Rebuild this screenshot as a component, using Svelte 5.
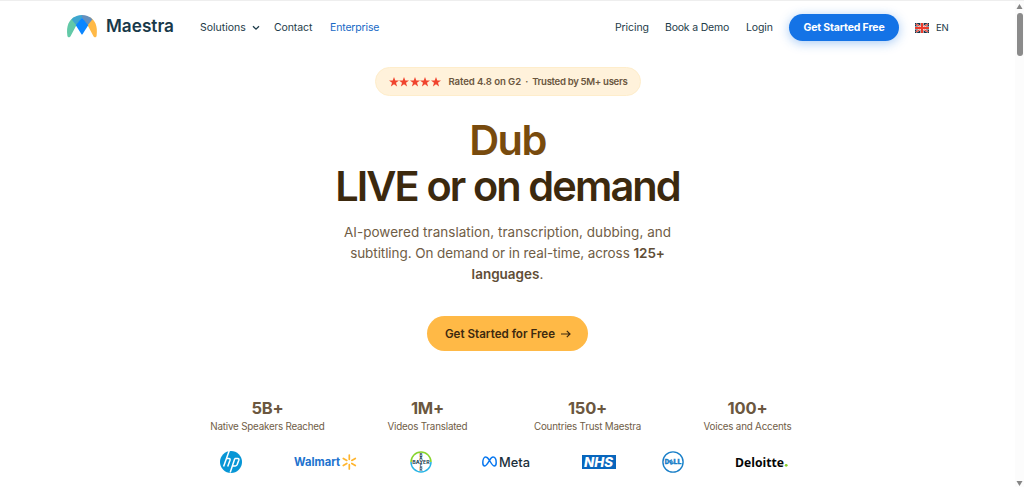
<script lang="ts">
  const stats = [
    { value: '5B+', label: 'Native Speakers Reached' },
    { value: '1M+', label: 'Videos Translated' },
    { value: '150+', label: 'Countries Trust Maestra' },
    { value: '100+', label: 'Voices and Accents' },
  ];
  const stars = [0, 1, 2, 3, 4];
</script>

<div class="page">
  <div class="content">
    <header>
      <a class="brand" href="#home">
        <svg width="30" height="23" viewBox="0 0 30 23">
          <path d="M.4 21C-1 11 2 4.5 8 1.8L11.5 10L9 11L3.4 21.4Q1.2 23.5 .4 21Z" fill="#62c9a7" />
          <path d="M29.6 21C31 11 28 4.5 22 1.8L18.5 10L21 11L26.6 21.4Q28.8 23.5 29.6 21Z" fill="#ffb946" />
          <path d="M4.5 4.2C8 1 11 0 15 0V3L9.5 10.5Z" fill="#3ea6cf" />
          <path d="M15 0C19 0 22 1 25.5 4.2L20.5 10.5L15 3Z" fill="#6590bd" />
          <path d="M15 2.5L21.2 10.2L15.7 19Q15 20 14.3 19L8.8 10.2Z" fill="#0b86ff" />
        </svg>
        <span>Maestra</span>
      </a>
      <nav class="left">
        <a class="solutions" href="#solutions">Solutions
          <svg width="8" height="6" viewBox="0 0 8 6" fill="none" stroke="#1d3b49" stroke-width="1.3"><path d="M1 1.2L4 4.2L7 1.2" /></svg>
        </a>
        <a class="contact" href="#contact">Contact</a>
        <a class="enterprise" href="#enterprise">Enterprise</a>
      </nav>
      <nav class="right">
        <a class="pricing" href="#pricing">Pricing</a>
        <a class="demo" href="#demo">Book a Demo</a>
        <a class="login" href="#login">Login</a>
        <a class="signup" href="#signup">Get Started Free</a>
        <span class="lang">
          <svg width="14" height="10" viewBox="0 0 14 10">
            <rect width="14" height="10" fill="#17364a" />
            <path d="M1 1L13 9M13 1L1 9" stroke="#fff" stroke-width="2" />
            <path d="M1 1L13 9M13 1L1 9" stroke="#ed3b2b" stroke-width="1.1" />
            <path d="M7 0V10M0 5H14" stroke="#fff" stroke-width="3.2" />
            <path d="M7 0V10M0 5H14" stroke="#ed3b2b" stroke-width="2.2" />
          </svg>
          EN
        </span>
      </nav>
    </header>

    <main>
      <div class="rating">
        <span class="stars">
          {#each stars as star (star)}
            <svg width="10" height="10" viewBox="0 0 20 20"><path d="M10 0L12.6 7H20L14 11.7L16.2 19L10 14.7L3.8 19L6 11.7L0 7H7.4Z" fill="#f0442e" /></svg>
          {/each}
        </span>
        <span class="rated">Rated 4.8 on G2</span>
        <span class="dot">·</span>
        <span>Trusted by 5M+ users</span>
      </div>

      <h1><span class="accent">Dub</span><span class="headline">LIVE or on demand</span></h1>

      <p class="intro">
        <span class="first">AI-powered translation, transcription, dubbing, and</span>
        <span class="second">subtitling. On demand or in real-time, across <b>125+</b></span>
        <span><b>languages</b>.</span>
      </p>

      <a class="cta" href="#signup">
        <span>Get Started for Free</span>
        <svg width="10" height="8" viewBox="0 0 10 8" fill="none" stroke="#3d290f" stroke-width="1.2"><path d="M0 4H9M5.8 .8L9 4L5.8 7.2" /></svg>
      </a>

      <section class="stats">
        {#each stats as stat (stat.value)}
          <div class="stat">
            <strong>{stat.value}</strong>
            <span>{stat.label}</span>
          </div>
        {/each}
      </section>

      <section class="logos">
        <svg width="22" height="22" viewBox="0 0 22 22">
          <circle cx="11" cy="11" r="11" fill="#0796d6" />
          <path d="M8.3 0L2.6 16M4.9 8.2H8Q9.5 8.2 9 9.8L6.7 16M13.8 8.2L9.2 22M13.8 8.2H16.8Q18.3 8.2 17.8 9.8L16.2 14.2Q15.8 15.5 14.3 15.5H11.5" transform="translate(1 -.6)" fill="none" stroke="#fff" stroke-width="1.5" />
        </svg>
        <svg class="walmart" width="63" height="16" viewBox="0 0 63 16">
          <text x="0" y="12" textLength="46" lengthAdjust="spacingAndGlyphs" font-size="11.5" font-weight="700" fill="#2172ce">Walmart</text>
          <path d="M55.3 1V5.3M55.3 10.7V15M49.3 4.4L52.8 6.4M57.8 9.5L61.3 11.5M49.3 11.5L52.8 9.5M57.8 6.4L61.3 4.4" stroke="#ffb52e" stroke-width="1.7" stroke-linecap="round" />
        </svg>
        <svg class="bayer" width="22" height="22" viewBox="0 0 22 22">
          <path d="M1 11A10 10 0 0 1 21 11" fill="none" stroke="#87d52d" stroke-width="1.5" />
          <path d="M21 11A10 10 0 0 1 1 11" fill="none" stroke="#28b4e5" stroke-width="1.5" />
          <g font-size="4.4" font-weight="700" fill="#173e50" text-anchor="middle">
            <text x="11" y="5.5">B</text>
            <text x="11" y="9.1">A</text>
            <text x="11" y="12.7" textLength="17.5" lengthAdjust="spacingAndGlyphs">BAYER</text>
            <text x="11" y="16.3">E</text>
            <text x="11" y="19.9">R</text>
          </g>
        </svg>
        <svg class="meta" width="49" height="14" viewBox="0 0 49 14">
          <path d="M7.3 5C5.8 2.7 4.8 2 3.7 2C1.9 2 .8 5 .8 7.8C.8 10 1.6 11 2.8 11C4.2 11 5.2 9.3 7.3 5.8C8.7 3.3 9.7 2 11.1 2C13.1 2 14.2 5 14.2 7.8C14.2 10 13.4 11 12.2 11C10.8 11 9.5 9 7.3 5Z" fill="none" stroke="#0877ef" stroke-width="1.5" />
          <text x="17" y="11.5" textLength="31" lengthAdjust="spacingAndGlyphs" font-size="12.8" font-weight="500" fill="#1b303b">Meta</text>
        </svg>
        <svg class="nhs" width="34" height="14" viewBox="0 0 34 14">
          <rect width="34" height="14" fill="#0866bd" />
          <text x="2" y="11.8" textLength="29" lengthAdjust="spacingAndGlyphs" font-size="13.2" font-weight="800" font-style="italic" fill="#fff">NHS</text>
        </svg>
        <svg class="dell" width="22" height="22" viewBox="0 0 22 22">
          <circle cx="11" cy="11" r="10.1" fill="none" stroke="#197fc8" stroke-width="1.4" />
          <g font-size="6" font-weight="900" fill="#197fc8" stroke="#197fc8" stroke-width=".3">
            <text x="2.8" y="13.2">D</text>
            <text x="-2.2" y="2.2" transform="translate(9.3 11) rotate(-28)">E</text>
            <text x="11.6" y="13.2" textLength="7.6" lengthAdjust="spacingAndGlyphs">LL</text>
          </g>
        </svg>
        <svg class="deloitte" width="53" height="14" viewBox="0 0 53 14">
          <text x="0" y="11.6" textLength="49" lengthAdjust="spacingAndGlyphs" font-size="13.2" font-weight="700" fill="#050505">Deloitte</text>
          <circle cx="51.2" cy="10.3" r="1.4" fill="#86ce2b" />
        </svg>
      </section>
    </main>
  </div>

  <div class="scrollbar">
    <svg width="7" height="5" viewBox="0 0 7 5"><path d="M3.5 0L6.5 5H.5Z" fill="#858585" /></svg>
    <span class="thumb"></span>
    <svg class="down" width="7" height="5" viewBox="0 0 7 5"><path d="M.5 0H6.5L3.5 5Z" fill="#858585" /></svg>
  </div>
</div>

<style>
  :global(body) {
    margin: 0;
    overflow: hidden;
  }

  .page {
    width: 1024px;
    height: 487px;
    box-sizing: border-box;
    display: flex;
    border-top: 1px solid #eee;
    background: #fff;
    font-family: Inter, 'Liberation Sans', sans-serif;
    color: #1d3b49;
  }

  .content {
    width: 1015px;
    height: 486px;
  }

  a {
    color: inherit;
    text-decoration: none;
    white-space: nowrap;
  }

  svg {
    display: block;
    flex: none;
    overflow: visible;
  }

  header {
    height: 53px;
    box-sizing: border-box;
    padding: 0 67px;
    display: flex;
    align-items: center;
  }

  .brand {
    width: 133px;
    display: flex;
    align-items: center;
    gap: 9px;
    font-size: 17.2px;
    font-weight: 600;
    line-height: 20px;
    color: #18394a;
  }

  .brand svg {
    margin-top: -3px;
  }

  .brand span {
    margin-top: -3px;
  }

  nav {
    display: flex;
    align-items: center;
    font-size: 10.5px;
    letter-spacing: -0.1px;
  }

  .right {
    margin-left: auto;
  }

  .solutions {
    width: 74px;
    display: flex;
    align-items: center;
    gap: 6px;
    letter-spacing: 0;
  }

  .contact {
    width: 56px;
  }

  .enterprise {
    color: #1769c6;
    letter-spacing: -0.15px;
  }

  .pricing {
    width: 50px;
  }

  .demo {
    width: 81px;
    letter-spacing: -0.2px;
  }

  .login {
    width: 43px;
  }

  .signup {
    width: 110px;
    height: 27px;
    line-height: 27px;
    border-radius: 14px;
    background: #1473e6;
    color: #fff;
    font-weight: 700;
    text-align: center;
    letter-spacing: -0.15px;
    box-shadow: 0 2px 11px rgba(20, 115, 230, 0.38);
  }

  .lang {
    width: 33px;
    margin-left: 16px;
    display: flex;
    align-items: center;
    gap: 7px;
    font-size: 9.6px;
    letter-spacing: -0.3px;
  }

  main {
    display: flex;
    flex-direction: column;
    align-items: center;
  }

  .rating {
    margin-top: 13px;
    width: 266px;
    height: 29px;
    box-sizing: border-box;
    padding-left: 13px;
    display: flex;
    align-items: center;
    border: 1px solid #feedcb;
    border-radius: 15px;
    background: #fff2db;
    font-size: 9.6px;
    font-weight: 600;
    color: #6b5740;
    white-space: nowrap;
    letter-spacing: -0.32px;
  }

  .rated {
    letter-spacing: -0.07px;
  }

  .stars {
    display: flex;
    gap: 0.6px;
    margin-right: 7.5px;
  }

  .dot {
    width: 11px;
    text-align: center;
  }

  h1 {
    margin: 21px 0 0;
    display: flex;
    flex-direction: column;
    align-items: center;
    font-size: 41.5px;
    font-weight: 600;
    line-height: 46px;
    letter-spacing: -1.6px;
    color: #3c290e;
    white-space: nowrap;
  }

  .accent {
    color: #784b0e;
  }

  .headline {
    letter-spacing: -1.9px;
  }

  .intro {
    margin: 13px 0 0;
    display: flex;
    flex-direction: column;
    align-items: center;
    font-size: 13.5px;
    line-height: 21px;
    color: #705d46;
    white-space: nowrap;
  }

  .first {
    letter-spacing: 0.04px;
  }

  .second {
    letter-spacing: -0.08px;
  }

  .intro b {
    font-weight: 600;
    color: #604d36;
  }

  .cta {
    margin-top: 31px;
    width: 161px;
    height: 35px;
    display: flex;
    align-items: center;
    justify-content: center;
    gap: 6px;
    border-radius: 18px;
    background: #ffb946;
    color: #3d290f;
    font-size: 11.6px;
    font-weight: 600;
  }

  .cta span {
    margin-left: 1px;
  }

  .stats {
    margin-top: 47px;
    width: 640px;
    display: grid;
    grid-template-columns: repeat(4, 1fr);
    color: #705d46;
  }

  .stat {
    display: flex;
    flex-direction: column;
    align-items: center;
    font-size: 9.8px;
    line-height: 15px;
    letter-spacing: -0.2px;
    white-space: nowrap;
  }

  .stat strong {
    font-size: 16.5px;
    font-weight: 700;
    line-height: 21px;
    color: #6b5740;
  }

  .logos {
    margin-top: 17px;
    width: 576px;
    display: flex;
    align-items: center;
  }

  .walmart {
    margin-left: 52px;
  }

  .bayer {
    margin-left: 53px;
  }

  .meta {
    margin-left: 50px;
  }

  .nhs {
    margin-left: 51px;
  }

  .dell {
    margin-left: 46px;
  }

  .deloitte {
    margin-left: 51px;
    font-family: 'Open Sans', sans-serif;
  }

  .scrollbar {
    width: 9px;
    box-sizing: border-box;
    padding: 3px 0 1px;
    display: flex;
    flex-direction: column;
    align-items: center;
    background: #fcfcfc;
  }

  .thumb {
    margin-top: 4px;
    width: 6px;
    height: 43px;
    border-radius: 3px;
    background: #8b8b8b;
  }

  .down {
    margin-top: auto;
  }
</style>
